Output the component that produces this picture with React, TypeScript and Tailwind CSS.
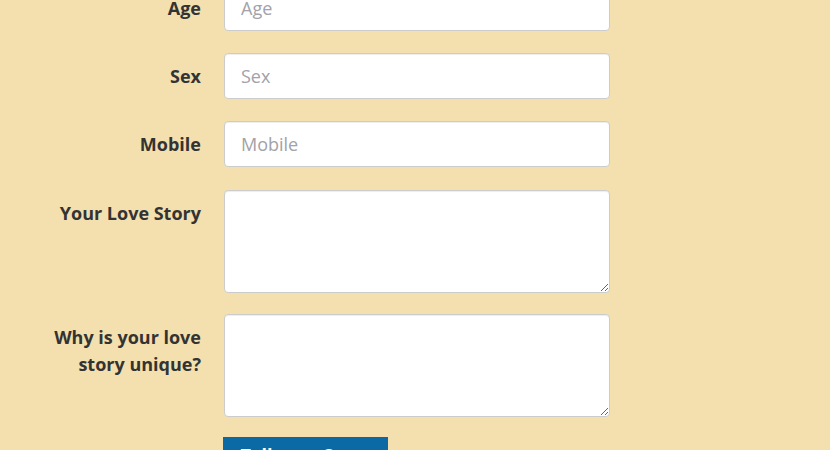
import React from "react";

const font = { fontFamily: '"Open Sans", "Noto Sans", "Liberation Sans", sans-serif' };

function Row({ label, children, mb }: { label: React.ReactNode; children: React.ReactNode; mb: string }) {
  return (
    <div className={"flex items-start " + mb}>
      <label className="w-[201px] text-right pt-[10px] text-[18px] leading-[27px] font-bold text-[#333]">
        {label}
      </label>
      <div className="ml-[23px] w-[386px]">{children}</div>
    </div>
  );
}

const inputCls =
  "block w-full h-[46px] px-[16px] text-[18px] bg-white border border-[#cccccc] rounded-[4px] shadow-[inset_0_1px_1px_rgba(0,0,0,0.075)] text-[#555] placeholder:text-[#a2a2a8] outline-none";
const areaCls =
  "block w-full h-[103px] px-[16px] py-[10px] text-[18px] bg-white border border-[#cccccc] rounded-[4px] shadow-[inset_0_1px_1px_rgba(0,0,0,0.075)] text-[#555] outline-none resize";

export default function App() {
  return (
    <div className="w-[830px] h-[450px] overflow-hidden bg-[#f3e0ae]" style={font}>
      <div className="-mt-[15px]">
        <Row label="Age" mb="mb-[22px]">
          <input className={inputCls} placeholder="Age" />
        </Row>
        <Row label="Sex" mb="mb-[22px]">
          <input className={inputCls} placeholder="Sex" />
        </Row>
        <Row label="Mobile" mb="mb-[23px]">
          <input className={inputCls} placeholder="Mobile" />
        </Row>
        <Row label="Your Love Story" mb="mb-[21px]">
          <textarea className={areaCls} />
        </Row>
        <Row
          mb="mb-[20px]"
          label={
            <>
              Why is your love
              <br />
              story unique?
            </>
          }
        >
          <textarea className={areaCls} />
        </Row>
        <div className="flex">
          <div className="w-[223px]" />
          <button className="w-[165px] h-[46px] flex items-start justify-center pt-[6px] bg-[#0b6aa3] text-white text-[18px] leading-[24px] font-bold">
            Tell your Story
          </button>
        </div>
      </div>
    </div>
  );
}
